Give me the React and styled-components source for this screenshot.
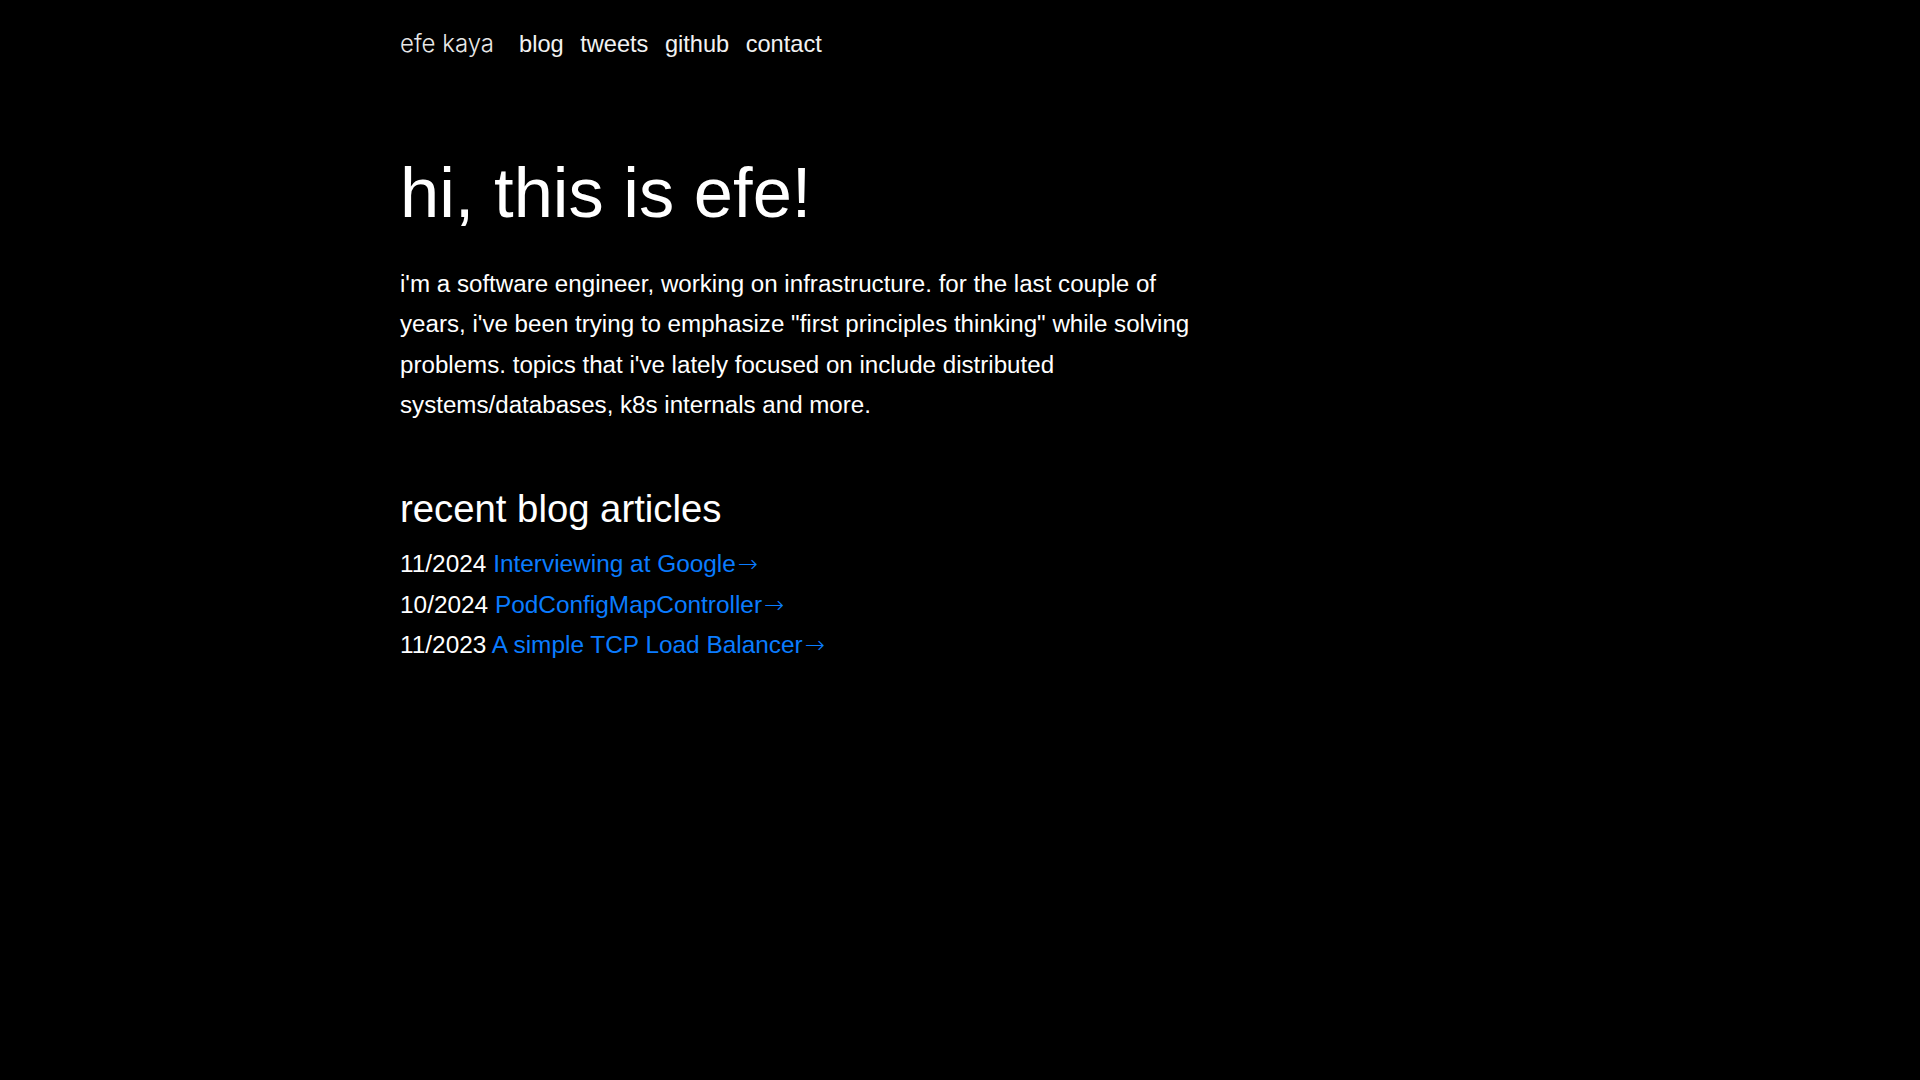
import React from 'react'
import styled, { createGlobalStyle } from 'styled-components'

const GlobalStyle = createGlobalStyle`
  html, body {
    margin: 0;
    padding: 0;
    background: #000;
  }
  body {
    color: #fff;
    font-family: 'Liberation Sans', Arial, sans-serif;
  }
`

const articles = [
  { date: '11/2024', title: 'Interviewing at Google' },
  { date: '10/2024', title: 'PodConfigMapController' },
  { date: '11/2023', title: 'A simple TCP Load Balancer' }
]

const Page = styled.div`
  min-height: 100vh;
  box-sizing: border-box;
  padding: 29px 0 0 400px;
`

const Content = styled.main`
  max-width: 800px;
`

const Nav = styled.nav`
  display: flex;
  align-items: baseline;
  height: 29px;
  font-size: 23.6px;
`

const Brand = styled.a`
  font-family: Inter, 'Noto Sans', sans-serif;
  font-weight: 300;
  font-size: 24px;
  color: #e8e8e8;
  text-decoration: none;
  margin-right: 25px;
`

const NavLink = styled.a`
  color: #f2f2f2;
  text-decoration: none;
  margin-right: 16.5px;
`

const Title = styled.h1`
  margin: 92px 0 0;
  font-size: 70.5px;
  font-weight: 400;
  line-height: 86px;
`

const Intro = styled.p`
  margin: 28px 0 0;
  font-size: 24.15px;
  line-height: 40.3px;
`

const SectionTitle = styled.h2`
  margin: 61px 0 0;
  font-size: 38.3px;
  font-weight: 400;
  line-height: 46px;
`

const ArticleList = styled.ul`
  list-style: none;
  margin: 12px 0 0;
  padding: 0;
  font-size: 24.4px;
  line-height: 40.5px;
`

const ArticleLink = styled.a`
  color: #0a7cff;
  text-decoration: none;
`

const Arrow = styled.span`
  font-family: 'DejaVu Sans', sans-serif;
  font-weight: 200;
  font-size: 24px;
  line-height: 1;
  margin-left: 2px;
`

export default function App() {
  return (
    <>
      <GlobalStyle />
      <Page>
        <Content>
          <Nav>
            <Brand href="#">efe kaya</Brand>
            <NavLink href="#">blog</NavLink>
            <NavLink href="#">tweets</NavLink>
            <NavLink href="#">github</NavLink>
            <NavLink href="#">contact</NavLink>
          </Nav>
          <Title>hi, this is efe!</Title>
          <Intro>
            i'm a software engineer, working on infrastructure. for the last couple of
            years, i've been trying to emphasize "first principles thinking" while solving
            problems. topics that i've lately focused on include distributed
            systems/databases, k8s internals and more.
          </Intro>
          <SectionTitle>recent blog articles</SectionTitle>
          <ArticleList>
            {articles.map(a => (
              <li key={a.title}>
                {a.date}{' '}
                <ArticleLink href="#">
                  {a.title}
                  <Arrow>→</Arrow>
                </ArticleLink>
              </li>
            ))}
          </ArticleList>
        </Content>
      </Page>
    </>
  )
}
